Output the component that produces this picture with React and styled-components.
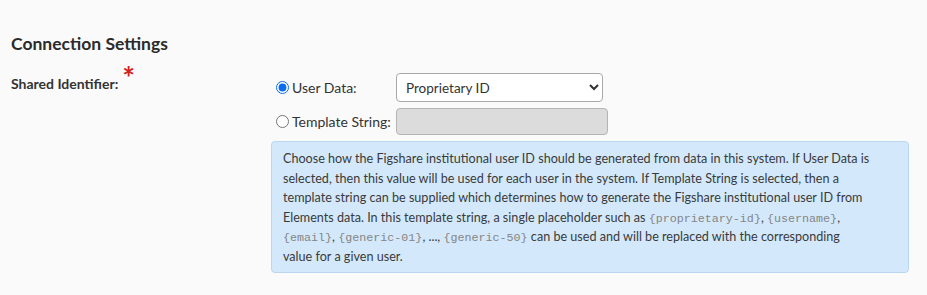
import React from "react";
import styled, { createGlobalStyle } from "styled-components";

const GlobalStyle = createGlobalStyle`
  html, body {
    margin: 0;
    padding: 0;
    background: #fafafa;
  }
  body {
    font-family: "Lato", "Liberation Sans", sans-serif;
    color: #333;
  }
`;

const Page = styled.div`
  width: 927px;
  height: 295px;
  box-sizing: border-box;
  padding: 32px 0 0 11px;
`;

const Heading = styled.h3`
  margin: 0 0 17px;
  font-size: 17.5px;
  font-weight: 700;
  color: #2b2b2b;
  line-height: 24px;
`;

const FieldRow = styled.div`
  display: grid;
  grid-template-columns: 260px 638px;
`;

const Label = styled.label`
  font-size: 14px;
  font-weight: 700;
  color: #333;
  padding-top: 2px;
  line-height: 18px;
`;

const Required = styled.span`
  color: #d21f1f;
  font-size: 30px;
  font-weight: 700;
  position: relative;
  top: 0;
  margin-left: 4px;
  line-height: 0;
`;

const Controls = styled.div`
  display: flex;
  flex-direction: column;
`;

const OptionRow = styled.div`
  display: flex;
  align-items: center;
  padding-left: 5px;
  margin-bottom: ${(p) => p.$gap || 0}px;
`;

const Radio = styled.input.attrs({ type: "radio" })`
  margin: 0 3px 0 0;
  width: 13px;
  height: 13px;
  accent-color: #0a6cf0;
`;

const OptionLabel = styled.span`
  font-size: 14px;
  color: #333;
  width: 104px;
  white-space: nowrap;
`;

const Select = styled.select`
  box-sizing: border-box;
  width: 207px;
  height: 29px;
  font-family: "Lato", "Liberation Sans", sans-serif;
  font-size: 13.5px;
  color: #333;
  background: #fff;
  border: 1px solid #a9a9a9;
  border-radius: 4px;
  padding: 0 5px;
`;

const TextInput = styled.input`
  box-sizing: border-box;
  width: 212px;
  height: 27px;
  background: #dcdcdc;
  border: 1px solid #b5b5b5;
  border-radius: 4px;
`;

const InfoBox = styled.div`
  box-sizing: border-box;
  width: 638px;
  margin-top: 6px;
  padding: 7px 11px 5px;
  background: #d3e9fb;
  border: 1px solid #b9d7f1;
  border-radius: 4px;
  font-size: 12.6px;
  line-height: 19.6px;
  color: #3a3a3a;
`;

const Code = styled.code`
  font-family: "Liberation Mono", monospace;
  font-size: 11.7px;
  line-height: 1;
  color: #858585;
`;

export default function App() {
  return (
    <>
      <GlobalStyle />
      <Page>
        <Heading>Connection Settings</Heading>
        <FieldRow>
          <Label>
            Shared Identifier:<Required>*</Required>
          </Label>
          <Controls>
            <OptionRow $gap={6}>
              <Radio name="id" defaultChecked />
              <OptionLabel>User Data:</OptionLabel>
              <Select defaultValue="pid">
                <option value="pid">Proprietary ID</option>
              </Select>
            </OptionRow>
            <OptionRow>
              <Radio name="id" />
              <OptionLabel>Template String:</OptionLabel>
              <TextInput disabled />
            </OptionRow>
            <InfoBox>
              Choose how the Figshare institutional user ID should be generated from data in this system. If User Data is
              <br />
              selected, then this value will be used for each user in the system. If Template String is selected, then a
              <br />
              template string can be supplied which determines how to generate the Figshare institutional user ID from
              <br />
              Elements data. In this template string, a single placeholder such as <Code>{"{proprietary-id}"}</Code>,{" "}
              <Code>{"{username}"}</Code>,
              <br />
              <Code>{"{email}"}</Code>, <Code>{"{generic-01}"}</Code>, ..., <Code>{"{generic-50}"}</Code> can be used
              and will be replaced with the corresponding
              <br />
              value for a given user.
            </InfoBox>
          </Controls>
        </FieldRow>
      </Page>
    </>
  );
}
